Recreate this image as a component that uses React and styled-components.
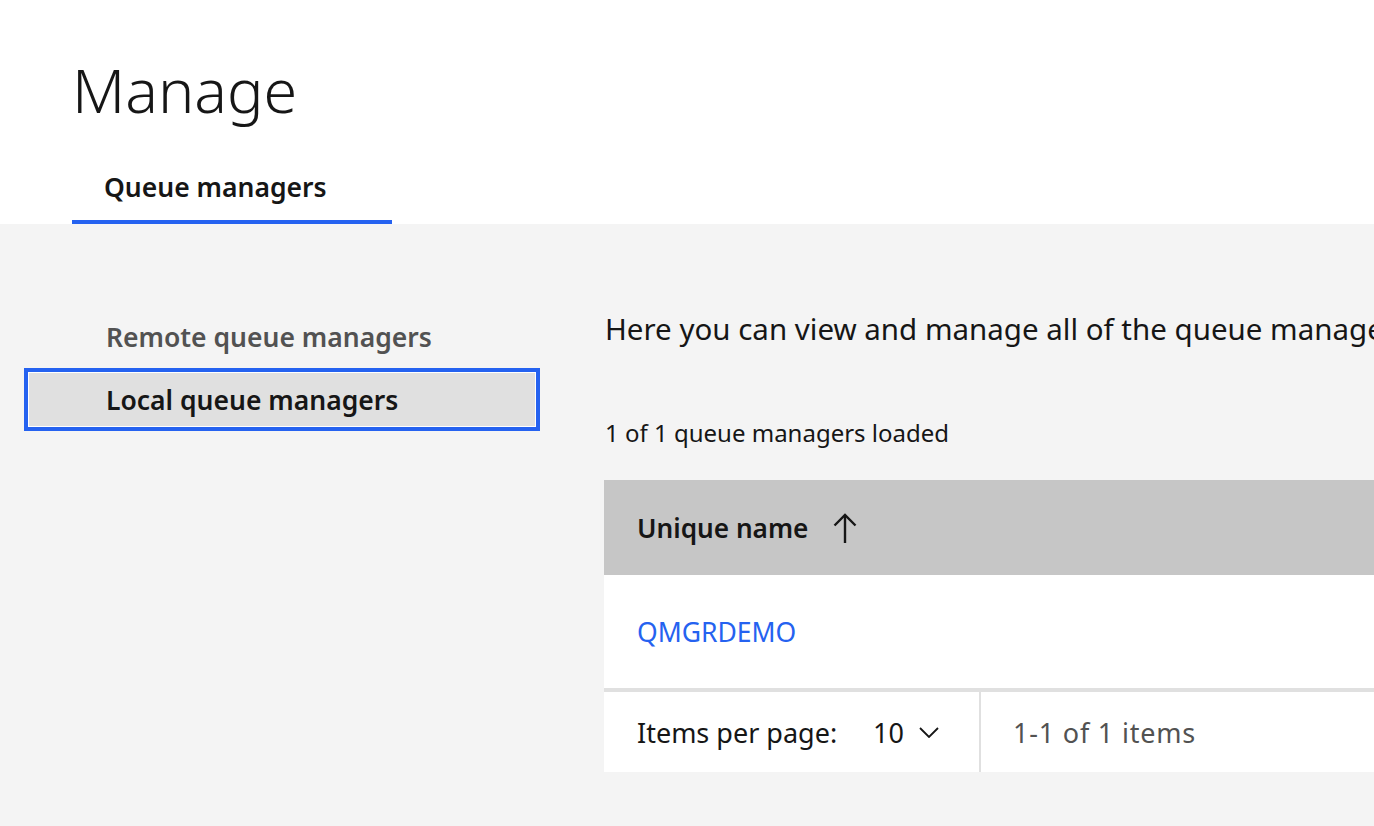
import React from "react";
import styled, { createGlobalStyle } from "styled-components";

const GlobalStyle = createGlobalStyle`
  html, body {
    margin: 0;
    padding: 0;
    background: #f4f4f4;
    overflow: hidden;
  }
  body {
    font-family: "Noto Sans", "Open Sans", sans-serif;
    color: #161616;
  }
`;

const Page = styled.div`
  width: 1374px;
  height: 826px;
  display: flex;
  flex-direction: column;
  overflow: hidden;
`;

const Header = styled.header`
  background: #ffffff;
  padding: 0 0 0 72px;
`;

const Title = styled.h1`
  margin: 0;
  padding: 50px 0 0 0;
  height: 95px;
  font-size: 61px;
  font-weight: 300;
  line-height: 80px;
`;

const Tabs = styled.nav`
  display: flex;
  margin-top: 25px;
`;

const Tab = styled.div`
  width: 320px;
  box-sizing: border-box;
  height: 54px;
  padding-left: 32px;
  font-size: 26.5px;
  font-weight: 600;
  line-height: 34px;
  color: #161616;
  border-bottom: 4px solid ${(p) => (p.active ? "#2562f0" : "transparent")};
`;

const Body = styled.div`
  flex: 1;
  display: flex;
  padding-top: 81px;
`;

const Sidebar = styled.aside`
  width: 516px;
  margin-left: 24px;
  flex-shrink: 0;
  display: flex;
  flex-direction: column;
`;

const SideItem = styled.div`
  height: 63px;
  box-sizing: border-box;
  display: flex;
  align-items: center;
  padding-left: 78px;
  font-size: 26.5px;
  font-weight: 600;
  color: ${(p) => (p.active ? "#161616" : "#525252")};
  background: ${(p) => (p.active ? "#e0e0e0" : "transparent")};
  border: 4px solid ${(p) => (p.active ? "#2562f0" : "transparent")};
  box-shadow: ${(p) => (p.active ? "inset 0 0 0 1px #ffffff" : "none")};
`;

const Main = styled.main`
  margin-left: 64px;
  flex: 1;
  min-width: 0;
`;

const Intro = styled.p`
  margin: 6px 0 0 1px;
  font-size: 29.5px;
  line-height: 36px;
  white-space: nowrap;
`;

const Count = styled.p`
  margin: 71px 0 0 1px;
  font-size: 24px;
  line-height: 30px;
  white-space: nowrap;
`;

const Table = styled.div`
  margin-top: 32px;
  width: 1000px;
`;

const HeadRow = styled.div`
  height: 95px;
  background: #c6c6c6;
  display: flex;
  align-items: center;
  padding-left: 33px;
  gap: 25px;
  font-size: 26.2px;
  font-weight: 600;
`;

const Row = styled.div`
  height: 113px;
  background: #ffffff;
  display: flex;
  align-items: center;
  padding-left: 33px;
  border-bottom: 4px solid #e0e0e0;
  font-size: 26.5px;
`;

const Link = styled.a`
  color: #2562f0;
  text-decoration: none;
`;

const Pagination = styled.div`
  height: 80px;
  background: #ffffff;
  display: flex;
  align-items: stretch;
  font-size: 27px;
`;

const PerPage = styled.div`
  width: 377px;
  box-sizing: border-box;
  display: flex;
  align-items: center;
  padding-left: 33px;
  border-right: 2px solid #e0e0e0;
`;

const PerLabel = styled.span`
  width: 236px;
`;

const Select = styled.span`
  display: flex;
  align-items: center;
  gap: 15px;
`;

const Range = styled.div`
  display: flex;
  align-items: center;
  padding-left: 32px;
  color: #525252;
  letter-spacing: 0.8px;
`;

export default function App() {
  return (
    <Page>
      <GlobalStyle />
      <Header>
        <Title>Manage</Title>
        <Tabs>
          <Tab active>Queue managers</Tab>
        </Tabs>
      </Header>
      <Body>
        <Sidebar>
          <SideItem>Remote queue managers</SideItem>
          <SideItem active>Local queue managers</SideItem>
        </Sidebar>
        <Main>
          <Intro>Here you can view and manage all of the queue managers available to you.</Intro>
          <Count>1 of 1 queue managers loaded</Count>
          <Table>
            <HeadRow>
              <span>Unique name</span>
              <svg width="24" height="30" viewBox="0 0 24 30" fill="none" stroke="#161616" strokeWidth="2.4">
                <path d="M12 30V2" />
                <path d="M1.5 12.5L12 2L22.5 12.5" />
              </svg>
            </HeadRow>
            <Row>
              <Link href="#">QMGRDEMO</Link>
            </Row>
            <Pagination>
              <PerPage>
                <PerLabel>Items per page:</PerLabel>
                <Select>
                  10
                  <svg width="20" height="11" viewBox="0 0 20 11" fill="none" stroke="#161616" strokeWidth="1.8">
                    <path d="M1 1L10 10L19 1" />
                  </svg>
                </Select>
              </PerPage>
              <Range>1-1 of 1 items</Range>
            </Pagination>
          </Table>
        </Main>
      </Body>
    </Page>
  );
}
